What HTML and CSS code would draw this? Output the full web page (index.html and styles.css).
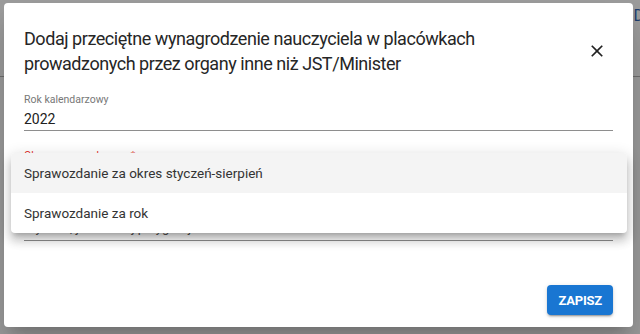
FILE: index.html
```html
<!DOCTYPE html>
<html lang="pl">
<head>
    <meta charset="UTF-8">
    <meta name="viewport" content="width=device-width, initial-scale=1.0">
    <title>Dodaj przeciętne wynagrodzenie</title>
    <link rel="stylesheet" href="styles.css">
</head>
<body>

    <!-- Page behind the backdrop -->
    <div class="page">
        <header class="page-header">
            <span class="page-link">D</span>
        </header>
    </div>

    <!-- Dialog -->
    <div class="dialog" role="dialog">
        <div class="dialog-header">
            <h2 class="dialog-title">Dodaj przeciętne wynagrodzenie nauczyciela w placówkach prowadzonych przez organy inne niż JST/Minister</h2>
            <button class="icon-btn" aria-label="Zamknij">
                <svg width="20" height="20" viewBox="0 0 24 24"><path d="M19 6.41 17.59 5 12 10.59 6.41 5 5 6.41 10.59 12 5 17.59 6.41 19 12 13.41 17.59 19 19 17.59 13.41 12z" fill="#212121"/></svg>
            </button>
        </div>

        <div class="dialog-content">
            <div class="field">
                <label class="field-label">Rok kalendarzowy</label>
                <div class="field-value">2022</div>
            </div>

            <div class="field field-select">
                <label class="field-label field-label--error">Okres sprawozdawczy *</label>
                <div class="field-value field-value--muted">Wybierz, jaki rodzaj przygotujesz</div>
            </div>
        </div>

        <div class="dialog-actions">
            <button class="btn-primary">ZAPISZ</button>
        </div>

        <!-- Open select menu -->
        <ul class="menu">
            <li class="menu-item menu-item--active">Sprawozdanie za okres styczeń-sierpień</li>
            <li class="menu-item">Sprawozdanie za rok</li>
        </ul>
    </div>

</body>
</html>
```

FILE: styles.css
```css
/* Base */
* {
    box-sizing: border-box;
}

body {
    margin: 0;
    width: 640px;
    height: 334px;
    overflow: hidden;
    background-color: #9c9c9c;
    font-family: Roboto, "Noto Sans", Arial, sans-serif;
    position: relative;
}

/* Page behind backdrop */
.page-header {
    height: 77px;
    border-bottom: 1px solid #6e6e6e;
    display: flex;
    justify-content: flex-end;
    padding-top: 6px;
}

.page-link {
    color: #1c3d6e;
    font-size: 16px;
    margin-right: -4px;
}

/* Dialog */
.dialog {
    position: absolute;
    left: 4px;
    top: 3px;
    width: 629px;
    height: 324px;
    background-color: #fff;
    border-radius: 4px;
    box-shadow: 0 11px 15px -7px rgba(0, 0, 0, 0.2), 0 24px 38px 3px rgba(0, 0, 0, 0.14);
    display: flex;
    flex-direction: column;
    padding: 23px 20px 12px 20px;
}

.dialog-header {
    display: flex;
    align-items: center;
    gap: 24px;
}

.dialog-title {
    flex: 1;
    margin: 0;
    font-size: 18px;
    line-height: 25px;
    letter-spacing: -0.45px;
    font-weight: 400;
    color: #262626;
}

.icon-btn {
    width: 32px;
    height: 32px;
    border: none;
    background: none;
    padding: 0;
    display: flex;
    align-items: center;
    justify-content: center;
}

/* Fields */
.dialog-content {
    flex: 1;
    padding-top: 18px;
}

.field {
    border-bottom: 1px solid #8e8e8e;
    padding-bottom: 1px;
}

.field-label {
    display: block;
    font-size: 10.5px;
    line-height: 12px;
    color: #777;
}

.field-label--error {
    color: #e53935;
}

.field-value {
    margin-top: 3px;
    font-size: 14px;
    line-height: 20px;
    color: #212121;
}

.field-select {
    margin-top: 19px;
    padding-bottom: 2px;
}

.field-select .field-value {
    margin-top: 56px;
    font-size: 13px;
}

.field-value--muted {
    color: #555;
}

/* Actions */
.dialog-actions {
    display: flex;
    justify-content: flex-end;
}

.btn-primary {
    height: 30px;
    padding: 0 11px;
    border: none;
    border-radius: 4px;
    background-color: #1976d2;
    color: #fff;
    font-family: Roboto, Arial, sans-serif;
    font-size: 13px;
    font-weight: 700;
    letter-spacing: -0.2px;
    box-shadow: 0 3px 1px -2px rgba(0, 0, 0, 0.2), 0 2px 2px 0 rgba(0, 0, 0, 0.14), 0 1px 5px 0 rgba(0, 0, 0, 0.12);
}

/* Select menu */
.menu {
    position: absolute;
    left: 7px;
    top: 150px;
    width: 616px;
    margin: 0;
    padding: 0;
    list-style: none;
    background-color: #fff;
    border-radius: 4px;
    box-shadow: 0 5px 5px -3px rgba(0, 0, 0, 0.2), 0 8px 10px 1px rgba(0, 0, 0, 0.14), 0 3px 14px 2px rgba(0, 0, 0, 0.12);
    overflow: hidden;
}

.menu-item {
    height: 40px;
    display: flex;
    align-items: center;
    padding-left: 13px;
    font-size: 13.5px;
    color: #333;
}

.menu-item--active {
    background-color: #f4f4f4;
}
```
